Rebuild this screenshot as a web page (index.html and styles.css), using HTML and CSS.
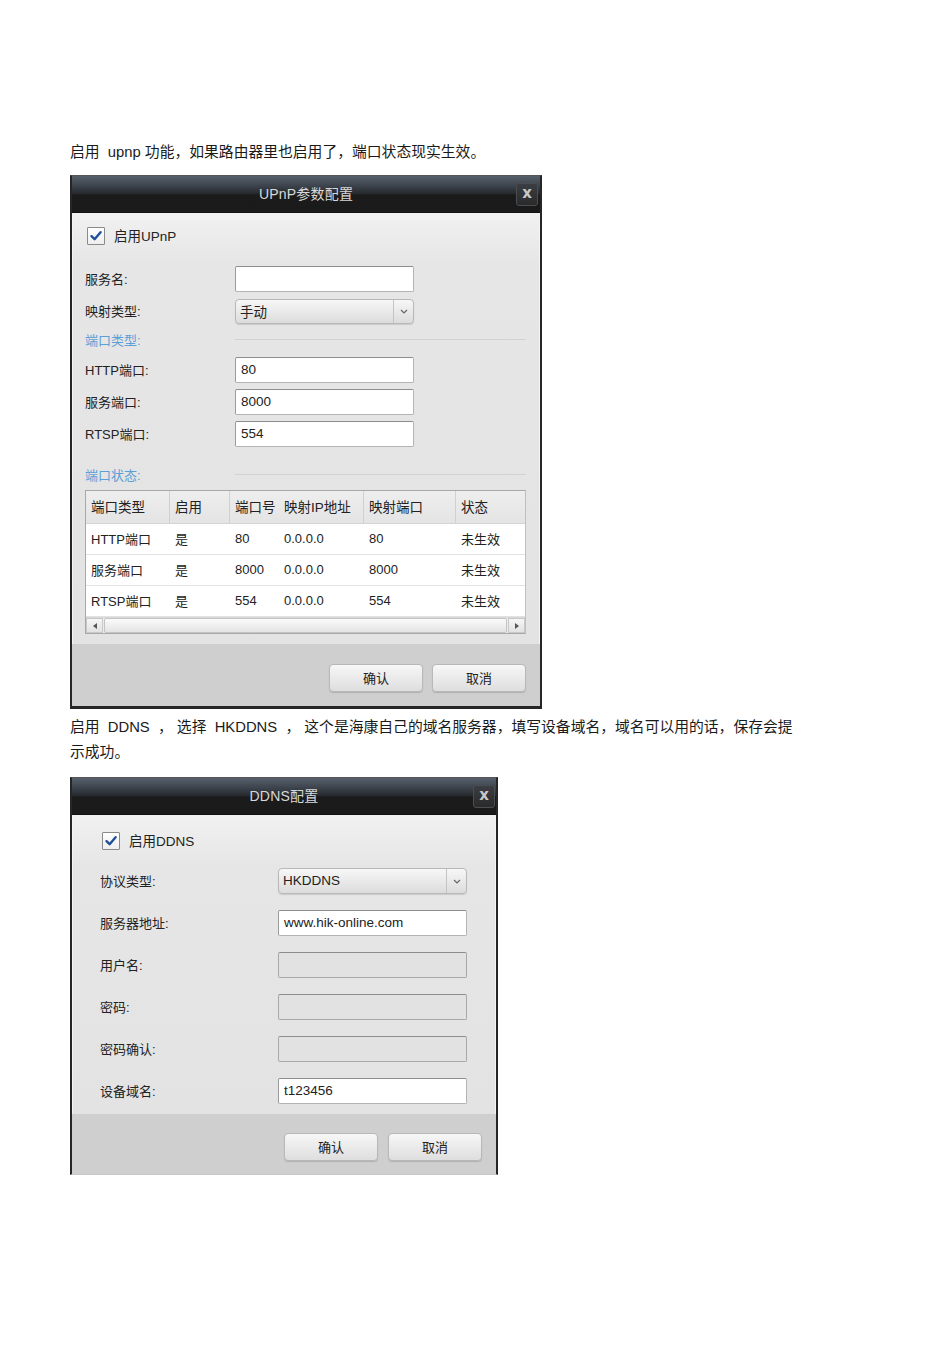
FILE: index.html
```html
<!DOCTYPE html>
<html lang="zh">
<head>
<meta charset="utf-8">
<link rel="stylesheet" href="styles.css">
</head>
<body>
<div class="page">
  <p class="para p1">启用&nbsp; upnp 功能，如果路由器里也启用了，端口状态现实生效。</p>

  <div class="dialog d1">
    <div class="titlebar">
      <span class="title">UPnP参数配置</span>
      <span class="close">x</span>
    </div>
    <div class="body b1">
      <div class="check-row">
        <span class="checkbox"><svg viewBox="0 0 14 14" width="14" height="14"><path d="M2.5 7.2 L5.6 10.2 L11.6 3.2" fill="none" stroke="#1d4f9a" stroke-width="2.4" stroke-linecap="round" stroke-linejoin="round"/></svg></span>
        <span class="check-label">启用UPnP</span>
      </div>
      <div class="field r-name"><span class="label">服务名:</span><span class="input"></span></div>
      <div class="field r-map"><span class="label">映射类型:</span><span class="select"><span class="sel-text">手动</span><span class="sel-btn"><svg viewBox="0 0 8 5" width="8" height="5"><path d="M1 1 L4 4 L7 1" fill="none" stroke="#666" stroke-width="1.2"/></svg></span></span></div>
      <div class="section s-type"><span class="sec-label">端口类型:</span><span class="sec-line"></span></div>
      <div class="field r-port"><span class="label">HTTP端口:</span><span class="input">80</span></div>
      <div class="field r-port"><span class="label">服务端口:</span><span class="input">8000</span></div>
      <div class="field r-port"><span class="label">RTSP端口:</span><span class="input">554</span></div>
      <div class="section s-state"><span class="sec-label">端口状态:</span><span class="sec-line"></span></div>
      <div class="table">
        <div class="trow thead">
          <span class="c1">端口类型</span><span class="c2">启用</span><span class="c3">端口号</span><span class="c4">映射IP地址</span><span class="c5">映射端口</span><span class="c6">状态</span>
        </div>
        <div class="trow">
          <span class="c1">HTTP端口</span><span class="c2">是</span><span class="c3">80</span><span class="c4">0.0.0.0</span><span class="c5">80</span><span class="c6">未生效</span>
        </div>
        <div class="trow">
          <span class="c1">服务端口</span><span class="c2">是</span><span class="c3">8000</span><span class="c4">0.0.0.0</span><span class="c5">8000</span><span class="c6">未生效</span>
        </div>
        <div class="trow">
          <span class="c1">RTSP端口</span><span class="c2">是</span><span class="c3">554</span><span class="c4">0.0.0.0</span><span class="c5">554</span><span class="c6">未生效</span>
        </div>
        <div class="hscroll">
          <span class="sb-btn"><svg viewBox="0 0 4 6" width="4" height="6"><path d="M4 0 L0 3 L4 6 Z" fill="#555"/></svg></span>
          <span class="sb-thumb"></span>
          <span class="sb-btn"><svg viewBox="0 0 4 6" width="4" height="6"><path d="M0 0 L4 3 L0 6 Z" fill="#555"/></svg></span>
        </div>
      </div>
    </div>
    <div class="footer f1">
      <span class="btn">确认</span><span class="btn">取消</span>
    </div>
  </div>

  <p class="para p2">启用&nbsp; DDNS&nbsp; ，&nbsp;选择&nbsp; HKDDNS&nbsp; ，&nbsp;这个是海康自己的域名服务器，填写设备域名，域名可以用的话，保存会提<br>示成功。</p>

  <div class="dialog d2">
    <div class="titlebar">
      <span class="title">DDNS配置</span>
      <span class="close">x</span>
    </div>
    <div class="body b2">
      <div class="check-row">
        <span class="checkbox"><svg viewBox="0 0 14 14" width="14" height="14"><path d="M2.5 7.2 L5.6 10.2 L11.6 3.2" fill="none" stroke="#1d4f9a" stroke-width="2.4" stroke-linecap="round" stroke-linejoin="round"/></svg></span>
        <span class="check-label">启用DDNS</span>
      </div>
      <div class="field f2row first"><span class="label">协议类型:</span><span class="select"><span class="sel-text">HKDDNS</span><span class="sel-btn"><svg viewBox="0 0 8 5" width="8" height="5"><path d="M1 1 L4 4 L7 1" fill="none" stroke="#666" stroke-width="1.2"/></svg></span></span></div>
      <div class="field f2row"><span class="label">服务器地址:</span><span class="input">www.hik-online.com</span></div>
      <div class="field f2row"><span class="label">用户名:</span><span class="input disabled"></span></div>
      <div class="field f2row"><span class="label">密码:</span><span class="input disabled"></span></div>
      <div class="field f2row"><span class="label">密码确认:</span><span class="input disabled"></span></div>
      <div class="field f2row"><span class="label">设备域名:</span><span class="input">t123456</span></div>
    </div>
    <div class="footer f2">
      <span class="btn">确认</span><span class="btn">取消</span>
    </div>
  </div>
</div>
</body>
</html>
```

FILE: styles.css
```css
* { box-sizing: border-box; }
html, body { margin: 0; padding: 0; background: #fff; }
body {
  font-family: "Liberation Sans", Arial, "Noto Sans CJK SC", sans-serif;
  color: #222;
}
.page {
  width: 950px;
  height: 1345px;
  padding-left: 70px;
  padding-top: 142px;
}
.para {
  margin: 0;
  font-size: 14.8px;
  color: #1a1a1a;
}
.p1 { line-height: 20px; margin-bottom: 13px; }
.p2 { line-height: 25px; margin-top: 6px; margin-bottom: 12px; }

.dialog {
  border-left: 2px solid #262626;
  border-right: 2px solid #262626;
  border-top: 1px solid #555;
  display: flex;
  flex-direction: column;
  background: #e4e4e4;
}
.d1 { width: 472px; border-bottom: 3px solid #262626; }
.d2 { width: 428px; border-bottom: 1px solid #c8c8c8; }

.titlebar {
  height: 37px;
  position: relative;
  display: flex;
  align-items: center;
  justify-content: center;
  padding-bottom: 2px;
  background: linear-gradient(#56606b 0%, #3a4049 30%, #25282c 50%, #1b1b1b 52%, #1a1a1a 100%);
  border-bottom: 1px solid #111;
}
.title {
  color: #d8d8d8;
  font-size: 14px;
  letter-spacing: 0.2px;
}
.close {
  position: absolute;
  right: 2px;
  top: 7px;
  width: 22px;
  height: 23px;
  border-radius: 3px;
  background: linear-gradient(#3a3d42, #2a2a2a);
  border: 1px solid #4a4d52;
  color: #c8c8c8;
  font-weight: bold;
  font-size: 15px;
  line-height: 19px;
  text-align: center;
  font-family: "DejaVu Sans", sans-serif;
}
.d2 .close { right: 1px; top: 7px; }

.body {
  background: linear-gradient(#f1f1f1 0px, #e6e6e6 50px, #e3e3e3 100%);
  border-left: 1px solid #f4f4f4;
  border-right: 1px solid #f4f4f4;
}
.b1 { padding: 14px 13px 10px 12px; }
.b2 { padding: 17px 28px 10px 27px; }

.check-row {
  display: flex;
  align-items: center;
  height: 18px;
}
.checkbox {
  width: 18px;
  height: 18px;
  background: linear-gradient(#ffffff, #eeeeee);
  border: 1px solid #8a8a8a;
  border-radius: 1px;
  display: flex;
  align-items: center;
  justify-content: center;
  margin-left: 2px;
}
.check-label {
  font-size: 13.5px;
  margin-left: 9px;
  color: #222;
  padding-bottom: 2px;
}

.field {
  display: flex;
  align-items: center;
}
.label {
  font-size: 13px;
  color: #222;
  flex: none;
  padding-bottom: 2px;
}
.b1 .label { width: 150px; }
.b2 .label { width: 178px; }

.input {
  height: 26px;
  background: #fff;
  border: 1px solid #b4b4b4;
  border-top-color: #8c8c8c;
  border-left-color: #9a9a9a;
  border-radius: 2px;
  font-size: 13.5px;
  padding-left: 5px;
  line-height: 24px;
  color: #222;
}
.b1 .input { width: 179px; }
.b2 .input { width: 190px; }
.input.disabled {
  background: #e2e2e2;
  border-color: #a8a8a8;
  border-top-color: #8c8c8c;
}

.select {
  height: 26px;
  display: flex;
  align-items: stretch;
  background: linear-gradient(#f7f7f7, #dcdcdc);
  border: 1px solid #b8b8b8;
  border-radius: 4px;
  box-shadow: 0 1px 1px rgba(0,0,0,0.12);
}
.b1 .select { width: 179px; height: 25px; }
.b2 .select { width: 190px; }
.sel-text {
  flex: 1;
  font-size: 13.5px;
  padding-left: 4px;
  padding-bottom: 2px;
  display: flex;
  align-items: center;
  color: #222;
}
.sel-btn {
  width: 20px;
  border-left: 1px solid #c4c4c4;
  display: flex;
  align-items: center;
  justify-content: center;
}

.r-name { margin-top: 21px; }
.r-map { margin-top: 7px; }
.r-port { margin-top: 6px; }

.section {
  display: flex;
  align-items: center;
  height: 22px;
}
.s-type { margin-top: 5px; }
.s-state { margin-top: 16px; margin-bottom: 3px; height: 24px; }
.sec-label {
  width: 150px;
  font-size: 13px;
  color: #5b9fd6;
  flex: none;
  padding-bottom: 2px;
}
.sec-line {
  flex: 1;
  height: 1px;
  background: #fafafa;
  border-top: 1px solid #d2d2d2;
  margin-top: -2px;
}

.table {
  border: 1px solid #a8a8a8;
  border-right-color: #c0c0c0;
  background: #fff;
  font-size: 13px;
}
.trow {
  display: flex;
  height: 31px;
  align-items: center;
  border-bottom: 1px solid #e2e2e2;
  color: #222;
  padding-bottom: 1px;
}
.trow > span { padding-left: 5px; flex: none; white-space: nowrap; }
.thead {
  height: 33px;
  background: linear-gradient(#eeeeee, #e4e4e4);
  border-bottom: 1px solid #d4d4d4;
  font-size: 13.5px;
  padding-bottom: 0;
}
.thead > span { height: 100%; display: flex; align-items: center; padding-bottom: 2px; }
.c1 { width: 84px; }
.c2 { width: 60px; }
.c3 { width: 50px; }
.c4 { width: 84px; padding-left: 4px !important; }
.c5 { width: 92px; }
.c6 { width: 70px; }
.thead .c1, .thead .c2, .thead .c4, .thead .c5 { border-right: 1px solid #d0d0d0; }

.hscroll {
  height: 16px;
  display: flex;
  background: #ececec;
  border-top: 1px solid #d8d8d8;
}
.sb-btn {
  width: 17px;
  display: flex;
  align-items: center;
  justify-content: center;
  background: linear-gradient(#f6f6f6, #e2e2e2);
  border: 1px solid #c8c8c8;
}
.sb-thumb {
  flex: 1;
  background: linear-gradient(#fafafa, #e4e4e4);
  border: 1px solid #c4c4c4;
  border-radius: 2px;
  margin: 0 1px;
}

.footer {
  background: #cfcfcf;
  display: flex;
  justify-content: flex-end;
  gap: 9px;
}
.f1 { height: 62px; padding: 20px 14px 0 0; }
.f2 { height: 60px; padding: 19px 14px 0 0; gap: 10px; }
.btn {
  width: 94px;
  height: 28px;
  background: linear-gradient(#f7f7f7, #dedede);
  border: 1px solid #b8b8b8;
  border-radius: 4px;
  box-shadow: 0 1px 1px rgba(0,0,0,0.15);
  font-size: 13px;
  display: flex;
  align-items: center;
  justify-content: center;
  padding-bottom: 2px;
  color: #222;
}

.f2row { margin-top: 16px; }
.f2row.first { margin-top: 18px; }
```
